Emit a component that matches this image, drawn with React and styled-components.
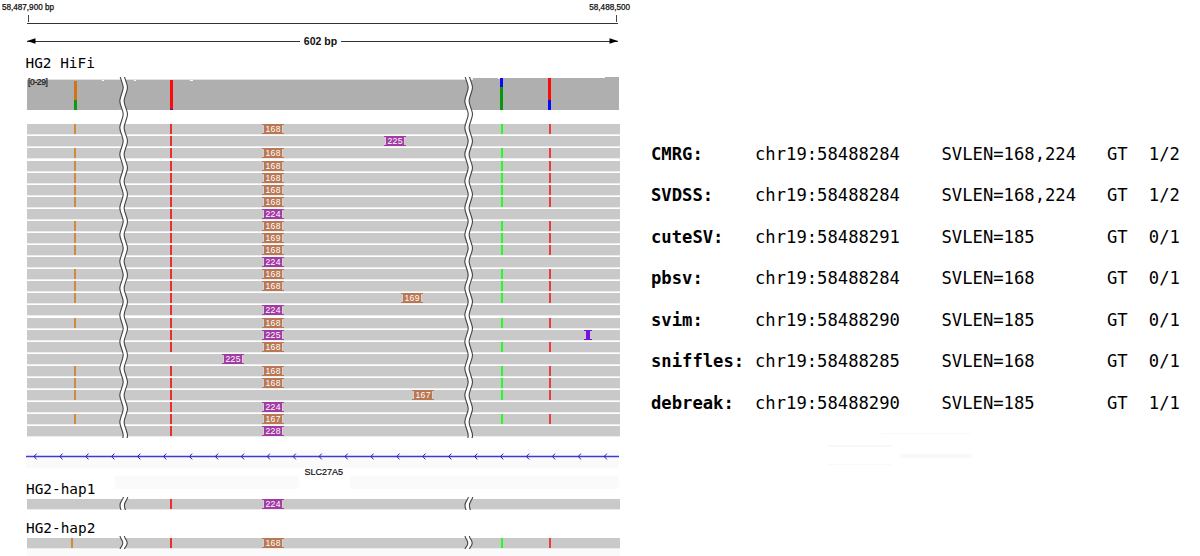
import React from 'react'
import styled, { createGlobalStyle, css } from 'styled-components'

const ORANGE = '#cf8a3e'
const RED = '#ee2c2c'
const GREEN = '#1dff1d'
const BROWN = '#b97853'
const PURPLE = '#a23ca4'

// every read: the insertion it carries, where it sits, and which SNVs it shows
const reads = [
    { label: 168, snv: 'all' },
    { label: 225, left: 357, snv: 'red' },
    { label: 168, snv: 'all' },
    { label: 168, snv: 'all' },
    { label: 168, snv: 'all' },
    { label: 168, snv: 'all' },
    { label: 168, snv: 'all' },
    { label: 224, snv: 'red' },
    { label: 168, snv: 'all' },
    { label: 169, snv: 'all' },
    { label: 168, snv: 'all' },
    { label: 224, snv: 'red' },
    { label: 168, snv: 'all' },
    { label: 168, snv: 'all' },
    { label: 169, left: 374, snv: 'all' },
    { label: 224, snv: 'red' },
    { label: 168, snv: 'all' },
    { label: 225, snv: 'red', small: true },
    { label: 168, snv: 'noOrange' },
    { label: 225, left: 195, snv: 'none' },
    { label: 168, snv: 'all' },
    { label: 168, snv: 'all' },
    { label: 167, left: 385, snv: 'all' },
    { label: 224, snv: 'red' },
    { label: 167, snv: 'all' },
    { label: 228, snv: 'red' },
]

const calls = [
    { tool: 'CMRG:', pos: 'chr19:58488284', len: 'SVLEN=168,224', gt: '1/2' },
    { tool: 'SVDSS:', pos: 'chr19:58488284', len: 'SVLEN=168,224', gt: '1/2' },
    { tool: 'cuteSV:', pos: 'chr19:58488291', len: 'SVLEN=185', gt: '0/1' },
    { tool: 'pbsv:', pos: 'chr19:58488284', len: 'SVLEN=168', gt: '0/1' },
    { tool: 'svim:', pos: 'chr19:58488290', len: 'SVLEN=185', gt: '0/1' },
    { tool: 'sniffles:', pos: 'chr19:58488285', len: 'SVLEN=168', gt: '0/1' },
    { tool: 'debreak:', pos: 'chr19:58488290', len: 'SVLEN=185', gt: '1/1' },
]

const chevrons = Array.from({ length: 23 }, (_, i) => 8 + i * 25.92)

// zigzag with rounded corners, swinging 3.4px to the right of x
const wavePath = (x) => {
    const half = 13.38
    let y = -2.8
    let right = false
    let d = `M${x} ${y}`
    while (y < 361) {
        const from = right ? x + 3.4 : x
        const to = right ? x : x + 3.4
        d += ` C${from} ${y + 4} ${to} ${y + half - 4} ${to} ${y + half}`
        y += half
        right = !right
    }
    return d
}

const Wave = ({ left }) => (
    <WaveSvg left={left} width="12" height="361" viewBox="0 0 12 361">
        <path d={wavePath(4)} stroke="#fff" strokeWidth="4" fill="none" />
        <path d={wavePath(1.8)} stroke="#444" strokeWidth="1.1" fill="none" />
        <path d={wavePath(6.1)} stroke="#444" strokeWidth="1.1" fill="none" />
    </WaveSvg>
)

const ShortBreak = ({ left, open }) => {
    const curve = (x) => open
        ? `M${x + 3.4} 0 C${x + 2.8} 3 ${x} 5 ${x} 8 C${x} 10 ${x + 0.6} 12 ${x + 1.2} 13`
        : `M${x} 0 C${x + 0.4} 3 ${x + 2.8} 4 ${x + 2.8} 7 C${x + 2.8} 10 ${x + 0.6} 11 ${x} 13`
    return (
        <ShortSvg left={left} width="12" height="13" viewBox="0 0 12 13">
            <path d={curve(4.2)} stroke="#fff" strokeWidth="4" fill="none" />
            <path d={curve(2)} stroke="#444" strokeWidth="1.1" fill="none" />
            <path d={curve(6.4)} stroke="#444" strokeWidth="1.1" fill="none" />
        </ShortSvg>
    )
}

const Read = ({ label, left = 235, snv, small, orangeAt = 47 }) => {
    const orange = snv === 'all'
    const right = snv === 'all' || snv === 'noOrange'
    return (
        <Bar>
            {orange && <Snv left={orangeAt} color={ORANGE} />}
            {snv !== 'none' && <Snv left={143} color={RED} />}
            {right && <Snv left={474} color={GREEN} />}
            {right && <Snv left={522} color="#e93c3c" />}
            <Insertion left={left} color={label > 200 ? PURPLE : BROWN}>
                <span>{label}</span>
            </Insertion>
            {small && <SmallInsertion />}
        </Bar>
    )
}

const App = () => {
    return (
        <Page>
            <GlobalStyle />
            <Browser>
                <Positions>
                    <span>58,487,900 bp</span>
                    <span>58,488,500</span>
                </Positions>
                <Ruler />
                <Span>
                    <SpanLine width={273} />
                    <ArrowHead width="9" height="6" viewBox="0 0 9 6" side="left"><path d="M0 3 L8.5 0.3 V5.7 Z" /></ArrowHead>
                    <SpanText>602 bp</SpanText>
                    <SpanLine width={277} />
                    <ArrowHead width="9" height="6" viewBox="0 0 9 6" side="right"><path d="M9 3 L0.5 0.3 V5.7 Z" /></ArrowHead>
                </Span>

                <TrackName>HG2 HiFi</TrackName>
                <Tracks>
                    <Coverage>
                        <CoverageSvg width="593" height="33" viewBox="0 0 593 33">
                            <path d="M0 3 H75 V4 H77 V3 H107 V4 H109 V3 H163 V4 H166 V3 H446 V1 H471 V2 H473 V1 H578 V0 H592 V33 H0 Z" fill="#afafaf" />
                            <rect x="0" y="2" width="446" height="1" fill="#e2e2e2" />
                            <rect x="47" y="4" width="3" height="19" fill="#d07416" />
                            <rect x="47" y="23" width="3" height="10" fill="#0f990f" />
                            <rect x="143" y="3" width="3" height="29" fill="#ff0808" />
                            <rect x="143" y="32" width="3" height="1" fill="#3a10e0" />
                            <rect x="473.4" y="1" width="3" height="9" fill="#0808ff" />
                            <rect x="473.4" y="10" width="3" height="23" fill="#0a960a" />
                            <rect x="521" y="1" width="3" height="22" fill="#ff0808" />
                            <rect x="521" y="23" width="3" height="10" fill="#0808ff" />
                        </CoverageSvg>
                        <Range>[0-29]</Range>
                    </Coverage>
                    <Reads>
                        {
                            reads.map((read, i) => {
                                return <ReadRow key={i}><Read {...read} /></ReadRow>
                            })
                        }
                    </Reads>
                    <Wave left={91} />
                    <Wave left={436} />
                </Tracks>

                <Gene>
                    <svg width="593" height="18" viewBox="0 0 593 18">
                        <rect width="593" height="18" fill="#fafafa" />
                        <path d="M0 6.5 H593" stroke="#3c3cd2" strokeWidth="1.3" />
                        {
                            chevrons.map((x) => (
                                <path key={x} d={`M${x + 2.6} 3.6 L${x} 6.5 L${x + 2.6} 9.4`} stroke="#2020b0" strokeWidth="1" fill="none" />
                            ))
                        }
                    </svg>
                    <GeneLabelRow>SLC27A5</GeneLabelRow>
                    <Shades>
                        <Shade width={184} />
                        <Shade width={269} />
                    </Shades>
                </Gene>

                <HapName>HG2-hap1</HapName>
                <HapTrack>
                    <Read label={224} snv="red" />
                    <ShortBreak left={91} open />
                    <ShortBreak left={436} open />
                </HapTrack>
                <HapName second>HG2-hap2</HapName>
                <HapTrack>
                    <Read label={168} snv="all" orangeAt={44} />
                    <ShortBreak left={91} />
                    <ShortBreak left={436} />
                </HapTrack>
                <Footer />
            </Browser>

            <Calls>
                {
                    calls.map((call) => {
                        return <Call key={call.tool}>
                                    <Tool>{call.tool}</Tool>
                                    <span>{call.pos}</span>
                                    <span>{call.len}</span>
                                    <span>GT</span>
                                    <span>{call.gt}</span>
                                </Call>
                    })
                }
                <Smudges width="143" height="32" viewBox="0 0 143 32">
                    <rect x="53" y="0" width="90" height="1" />
                    <rect y="12" width="63" height="2" />
                    <rect x="72" y="21" width="71" height="4" />
                    <rect y="31" width="63" height="1" />
                </Smudges>
            </Calls>
        </Page>
    )
}

const GlobalStyle = createGlobalStyle`
    * {
        box-sizing: border-box;
    }
    body {
        margin: 0;
        background: #fff;
        overflow: hidden;
    }
    svg {
        display: block;
    }
`

const mono = css`
    font-family: "DejaVu Sans Mono", monospace;
    color: #000;
    white-space: pre;
`

const Page = styled.div`
    width: 1200px;
    height: 556px;
    display: flex;
    overflow: hidden;
    background: #fff;
    font-family: "Liberation Sans", Arial, sans-serif;
`

const Browser = styled.div`
    width: 651px;
    height: 556px;
    flex: none;
    display: flex;
    flex-direction: column;
`

const Positions = styled.div`
    height: 15px;
    flex: none;
    width: 630px;
    padding: 3px 0 0 2px;
    display: flex;
    justify-content: space-between;
    font-size: 8.15px;
    line-height: 9px;
    color: #111;
    -webkit-text-stroke: 0.25px #111;
`

const Ruler = styled.div`
    height: 9px;
    width: 591px;
    flex: none;
    margin-left: 27px;
    border-bottom: 1px solid #333;
    background:
        linear-gradient(#444, #444) 1px 0 / 1px 7px no-repeat,
        linear-gradient(#444, #444) 589px 0 / 1px 7px no-repeat;
`

const Span = styled.div`
    height: 12px;
    width: 591px;
    flex: none;
    margin: 11px 0 0 27px;
    display: flex;
    align-items: center;
    position: relative;
`
const SpanLine = styled.div`
    width: ${(props) => props.width}px;
    flex: none;
    height: 1px;
    background: #333;
`
const SpanText = styled.div`
    width: 41px;
    flex: none;
    text-align: center;
    font-size: 10.5px;
    line-height: 12px;
    font-weight: bold;
    color: #111;
`
const ArrowHead = styled.svg`
    position: absolute;
    top: 3px;
    ${(props) => props.side}: 0;
`

const TrackName = styled.div`
    ${mono}
    height: 30px;
    flex: none;
    padding: 8px 0 0 25.5px;
    font-size: 14.4px;
    line-height: 17px;
`

const Tracks = styled.div`
    width: 593px;
    height: 361px;
    flex: none;
    margin-left: 27px;
    position: relative;
`
const Coverage = styled.div`
    height: 33px;
    position: relative;
`
const CoverageSvg = styled.svg`
    shape-rendering: crispEdges;
`
const Range = styled.span`
    position: absolute;
    left: 1px;
    top: 1px;
    font-size: 8.5px;
    line-height: 9px;
    letter-spacing: -0.35px;
    color: #111;
    -webkit-text-stroke: 0.2px #111;
`
const Reads = styled.div`
    padding-top: 14.3px;
`
const ReadRow = styled.div`
    height: 12.08px;
`
const Bar = styled.div`
    height: 10px;
    position: relative;
    background: #c9c9c9;
    box-shadow: 0 1px 0 #ececec;
`
const Snv = styled.i`
    position: absolute;
    top: 0;
    left: ${(props) => props.left}px;
    width: 2px;
    height: 10px;
    background: ${(props) => props.color};
`

// capped block with pale brackets round the inserted length
const Insertion = styled.div`
    position: absolute;
    left: ${(props) => props.left}px;
    top: 0;
    width: 22px;
    height: 10px;
    border: solid ${(props) => props.color};
    border-width: 1px 0;
    background: linear-gradient(${(props) => props.color}, ${(props) => props.color}) 2px 0 / 18px 100% no-repeat;
    text-align: center;
    font-family: "Liberation Sans", Arial, sans-serif;
    font-size: 8.6px;
    line-height: 9px;
    letter-spacing: 0.4px;
    text-indent: 0.4px;
    color: #fff;

    &::before,
    &::after {
        content: "";
        position: absolute;
        top: 1px;
        bottom: 1px;
        width: 1px;
        background: #dccfd0;
    }
    &::before {
        left: 1px;
    }
    &::after {
        right: 1px;
    }
`
const SmallInsertion = styled.div`
    position: absolute;
    left: 557px;
    top: 0;
    width: 8px;
    height: 10px;
    border: solid #7512dd;
    border-width: 1px 0;
    background: linear-gradient(#7512dd, #7512dd) 2px 0 / 4px 100% no-repeat;
`

const WaveSvg = styled.svg`
    position: absolute;
    left: ${(props) => props.left}px;
    top: 0;
`
const ShortSvg = styled.svg`
    position: absolute;
    left: ${(props) => props.left}px;
    top: -2px;
`

const Gene = styled.div`
    width: 593px;
    height: 39px;
    flex: none;
    margin: 12px 0 0 26px;
`
const GeneLabelRow = styled.div`
    height: 8px;
    padding-left: 278.5px;
    font-size: 9px;
    line-height: 8px;
    color: #111;
    -webkit-text-stroke: 0.2px #111;
`
const Shades = styled.div`
    display: flex;
    justify-content: flex-end;
    gap: 51px;
`
const Shade = styled.div`
    width: ${(props) => props.width}px;
    height: 13px;
    background: #fafafa;
`

const HapName = styled.div`
    ${mono}
    height: 29px;
    flex: none;
    padding: 11px 0 0 26px;
    font-size: 14.4px;
    line-height: 17px;
    ${(props) => !props.second && css`
        height: 18px;
        margin-top: -8px;
        padding-top: 0;
    `}
`
const HapTrack = styled.div`
    width: 593px;
    height: 10px;
    flex: none;
    margin-left: 27px;
    position: relative;
`
const Footer = styled.div`
    width: 593px;
    flex: 1;
    margin: 1px 0 0 27px;
    background: #fafafa;
`

const Calls = styled.div`
    flex: 1;
    padding-top: 133px;
`
const Call = styled.div`
    ${mono}
    height: 41.5px;
    display: grid;
    grid-template-columns: 104px 186.5px 165.5px 41.8px 50px;
    align-items: center;
    font-size: 17.2px;
    line-height: 20px;
`
const Tool = styled.b`
    font-weight: bold;
`
const Smudges = styled.svg`
    margin: 9px 0 0 177px;
    fill: #f9f9f9;
`

export default App
